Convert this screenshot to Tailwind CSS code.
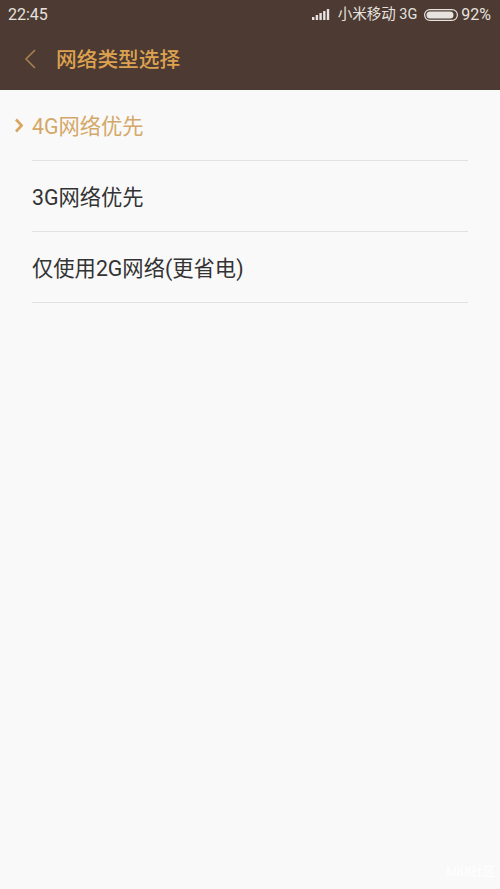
<!DOCTYPE html>
<html lang="zh-CN">
<head>
  <meta charset="UTF-8">
  <title>网络类型选择</title>
  <script src="https://cdn.jsdelivr.net/npm/@tailwindcss/browser@4"></script>
</head>
<body class="relative h-[889px] w-[500px] overflow-hidden bg-[#f9f9f9] font-['Roboto','Noto_Sans_CJK_SC',sans-serif]">
  <!-- Header -->
  <div class="h-[90px] bg-[#4c3a33]">
    <div class="flex h-[29px] items-center justify-between pl-2 pr-[9px] text-[16px] text-[#e6e2df]">
      <span>22:45</span>
      <div class="flex items-center">
        <svg class="mr-2" width="18" height="11" viewBox="0 0 18 11" fill="#e6e2df">
          <rect x="0" y="8" width="2.4" height="3"/>
          <rect x="3.7" y="6" width="2.4" height="5"/>
          <rect x="7.4" y="4" width="2.4" height="7"/>
          <rect x="11.1" y="2" width="2.4" height="9"/>
          <rect x="14.8" y="0" width="2.4" height="11"/>
        </svg>
        <span class="mr-[7px] text-[14.5px]">小米移动 3G</span>
        <svg class="mr-[3px]" width="34" height="12" viewBox="0 0 34 12">
          <rect x="0.6" y="0.6" width="32.8" height="10.8" rx="5.4" fill="none" stroke="#e6e2df" stroke-width="1.2"/>
          <rect x="2.5" y="2.5" width="27" height="7" rx="3.5" fill="#e6e2df"/>
        </svg>
        <span>92%</span>
      </div>
    </div>
    <div class="flex h-[61px] items-center">
      <svg class="ml-[24px] mb-[1px]" width="12" height="20" viewBox="0 0 12 20" fill="none" stroke="#a8804f" stroke-width="1.6">
        <path d="M11 1 L2 10 L11 19"/>
      </svg>
      <h1 class="ml-[20px] pt-[3px] text-[20.7px] font-medium text-[#dda250]">网络类型选择</h1>
    </div>
  </div>

  <!-- Options -->
  <div class="mx-8">
    <div class="relative flex h-[71px] items-center border-b border-[#e2e2e2] pt-[3px] text-[21.3px] text-[#d4a868]">
      <svg class="absolute -left-[18px] top-[28px]" width="10" height="15" viewBox="0 0 10 15" fill="none" stroke="#d9a45c" stroke-width="2.6">
        <path d="M2 1.5 L7.6 7.5 L2 13.5"/>
      </svg>
      4G网络优先
    </div>
    <div class="flex h-[71px] items-center border-b border-[#e2e2e2] pt-[3px] text-[21.3px] text-[#333333]">3G网络优先</div>
    <div class="flex h-[71px] items-center border-b border-[#e2e2e2] pt-[3px] text-[21.3px] text-[#333333]">仅使用2G网络(更省电)</div>
  </div>

  <!-- Watermark -->
  <span class="absolute bottom-[11px] right-[5px] text-[12px] leading-none text-white">MIUI社区</span>
</body>
</html>
